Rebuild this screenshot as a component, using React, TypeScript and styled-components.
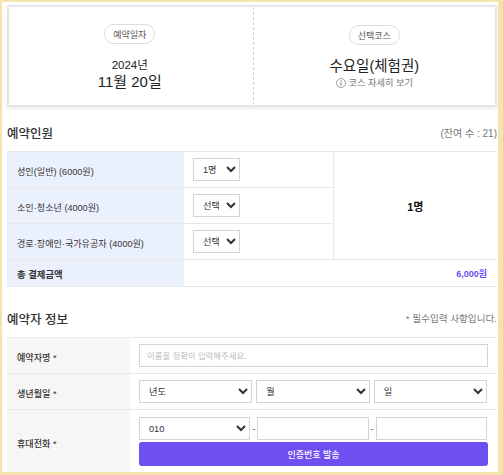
import React from 'react';
import styled, { createGlobalStyle } from 'styled-components';

const GlobalStyle = createGlobalStyle`
  html, body {
    margin: 0;
    padding: 0;
    background: #fff;
  }
  * {
    box-sizing: border-box;
  }
`;

const Frame = styled.div`
  width: 503px;
  height: 475px;
  overflow: hidden;
  border: solid #f3e4ab;
  border-width: 2px 5px 3px 2px;
  padding: 3px 1px 0 5px;
  background: #fff;
  font-family: 'Liberation Sans', 'Noto Sans CJK KR', sans-serif;
  color: #222;
`;

const SummaryCard = styled.div`
  display: flex;
  height: 102px;
  border: 2px solid #e6e6e6;
  box-shadow: 0 2px 4px rgba(0, 0, 0, 0.08);
`;

const SummaryCol = styled.div<{ $divided?: boolean }>`
  flex: 1;
  display: flex;
  flex-direction: column;
  align-items: center;
  padding-top: ${(p) => (p.$divided ? 18 : 17)}px;
  padding-right: ${(p) => (p.$divided ? 0 : 2)}px;
  border-left: ${(p) => (p.$divided ? '1px dashed #d5d5d5' : '0')};
`;

const Pill = styled.span`
  display: flex;
  align-items: center;
  justify-content: center;
  width: 51px;
  height: 20px;
  border: 1px solid #ddd;
  border-radius: 10px;
  font-size: 9px;
  color: #555;
`;

const YearText = styled.div`
  margin-top: 14px;
  font-size: 11.5px;
  line-height: 15px;
`;

const DateText = styled.div`
  font-size: 15px;
  line-height: 17px;
`;

const CourseName = styled.div`
  margin-top: 11px;
  font-size: 14.5px;
  line-height: 20px;
`;

const CourseLink = styled.div`
  display: flex;
  align-items: center;
  gap: 3px;
  font-size: 9.2px;
  line-height: 14px;
  color: #777;
`;

const SectionHead = styled.div<{ $top: number }>`
  display: flex;
  align-items: center;
  justify-content: space-between;
  margin-top: ${(p) => p.$top}px;
  height: 38px;
`;

const SectionTitle = styled.h2`
  margin: 0;
  font-size: 12.5px;
  font-weight: 500;
  color: #333;
`;

const SectionNote = styled.span<{ $size: number }>`
  font-size: ${(p) => p.$size}px;
  color: #777;
`;

const Table = styled.table`
  width: 490px;
  border-collapse: collapse;
  table-layout: fixed;
  border-top: 1px solid #e8e8e8;
`;

const Row = styled.tr<{ $height: number }>`
  height: ${(p) => p.$height}px;
  border-bottom: 1px solid #e8e8e8;
`;

const Label = styled.th<{ $tone: 'blue' | 'gray' }>`
  padding: 2px 0 0 10px;
  text-align: left;
  font-size: 9.1px;
  font-weight: ${(p) => (p.$tone === 'gray' ? 500 : 400)};
  color: #333;
  background: ${(p) => (p.$tone === 'blue' ? '#ebf0fd' : '#f6f6f6')};
`;

const TotalLabel = styled(Label)`
  font-size: 9.4px;
  font-weight: 700;
`;

const Cell = styled.td`
  padding: 0 9px;
`;

const CountCell = styled.td`
  text-align: center;
  vertical-align: middle;
  font-size: 11px;
  font-weight: 700;
  color: #111;
  border-left: 1px solid #e8e8e8;
`;

const TotalAmount = styled.td`
  padding-right: 10px;
  text-align: right;
  font-size: 9px;
  font-weight: 700;
  color: #6e4ff0;
`;

const Field = styled.select<{ $width?: number }>`
  height: 23px;
  width: ${(p) => (p.$width ? `${p.$width}px` : '100%')};
  min-width: 0;
  padding: 0 4px 0 5px;
  border: 1px solid #d4d4d4;
  background: #fff;
  font-family: inherit;
  font-size: 9.2px;
  color: #333;
  border-radius: 0;
`;

const TextField = styled.input`
  display: block;
  width: 100%;
  min-width: 0;
  height: 23px;
  padding: 0 7px;
  border: 1px solid #d4d4d4;
  font-family: inherit;
  font-size: 8.4px;

  &::placeholder {
    color: #bbb;
  }
`;

const BirthRow = styled.div`
  display: grid;
  grid-template-columns: repeat(3, 1fr);
  gap: 4px;
  padding-right: 1px;
`;

const PhoneRow = styled.div`
  display: grid;
  grid-template-columns: 1fr 3px 1fr 3px 1fr;
  align-items: center;
  gap: 2px;
  padding-right: 1px;
`;

const Dash = styled.span`
  font-size: 9px;
  color: #555;
`;

const SendButton = styled.button`
  display: block;
  width: 100%;
  height: 24px;
  margin-top: 2px;
  border: 0;
  border-radius: 3px;
  background: #6e4ff0;
  color: #fff;
  font-family: inherit;
  font-size: 9px;
  font-weight: 500;
`;

const PhoneCell = styled(Cell)`
  vertical-align: top;
  padding-top: 7px;
`;

const InfoIcon = () => (
  <svg width="10" height="10" viewBox="0 0 10 10" fill="none" stroke="#777" strokeWidth="0.7">
    <circle cx="5" cy="5" r="4.5" />
    <path d="M5 4.2V7.6M5 2.4V3.4" strokeWidth="1" />
  </svg>
);

const App = () => {
  return (
    <Frame>
      <GlobalStyle />
      <SummaryCard>
        <SummaryCol>
          <Pill>예약일자</Pill>
          <YearText>2024년</YearText>
          <DateText>11월 20일</DateText>
        </SummaryCol>
        <SummaryCol $divided>
          <Pill>선택코스</Pill>
          <CourseName>수요일(체험권)</CourseName>
          <CourseLink>
            <InfoIcon />
            코스 자세히 보기
          </CourseLink>
        </SummaryCol>
      </SummaryCard>

      <SectionHead $top={6}>
        <SectionTitle>예약인원</SectionTitle>
        <SectionNote $size={10}>(잔여 수 : 21)</SectionNote>
      </SectionHead>
      <Table>
        <colgroup>
          <col width="177" />
          <col width="149" />
          <col width="164" />
        </colgroup>
        <tbody>
          <Row $height={36}>
            <Label $tone="blue">성인(일반) (6000원)</Label>
            <Cell>
              <Field $width={47} defaultValue="1">
                <option value="1">1명</option>
              </Field>
            </Cell>
            <CountCell rowSpan={3}>1명</CountCell>
          </Row>
          <Row $height={36}>
            <Label $tone="blue">소인·청소년 (4000원)</Label>
            <Cell>
              <Field $width={47}>
                <option>선택</option>
              </Field>
            </Cell>
          </Row>
          <Row $height={36}>
            <Label $tone="blue">경로·장애인·국가유공자 (4000원)</Label>
            <Cell>
              <Field $width={47}>
                <option>선택</option>
              </Field>
            </Cell>
          </Row>
          <Row $height={27}>
            <TotalLabel $tone="blue">총 결제금액</TotalLabel>
            <TotalAmount colSpan={2}>6,000원</TotalAmount>
          </Row>
        </tbody>
      </Table>

      <SectionHead $top={12}>
        <SectionTitle>예약자 정보</SectionTitle>
        <SectionNote $size={9.6}>* 필수입력 사항입니다.</SectionNote>
      </SectionHead>
      <Table>
        <colgroup>
          <col width="123" />
          <col width="367" />
        </colgroup>
        <tbody>
          <Row $height={36}>
            <Label $tone="gray">예약자명 *</Label>
            <Cell>
              <TextField placeholder="이름을 정확히 입력해주세요." />
            </Cell>
          </Row>
          <Row $height={36}>
            <Label $tone="gray">생년월일 *</Label>
            <Cell>
              <BirthRow>
                <Field>
                  <option>년도</option>
                </Field>
                <Field>
                  <option>월</option>
                </Field>
                <Field>
                  <option>일</option>
                </Field>
              </BirthRow>
            </Cell>
          </Row>
          <Row $height={64}>
            <Label $tone="gray">휴대전화 *</Label>
            <PhoneCell>
              <PhoneRow>
                <Field>
                  <option>010</option>
                </Field>
                <Dash>-</Dash>
                <TextField />
                <Dash>-</Dash>
                <TextField />
              </PhoneRow>
              <SendButton>인증번호 발송</SendButton>
            </PhoneCell>
          </Row>
        </tbody>
      </Table>
    </Frame>
  );
};

export default App;
